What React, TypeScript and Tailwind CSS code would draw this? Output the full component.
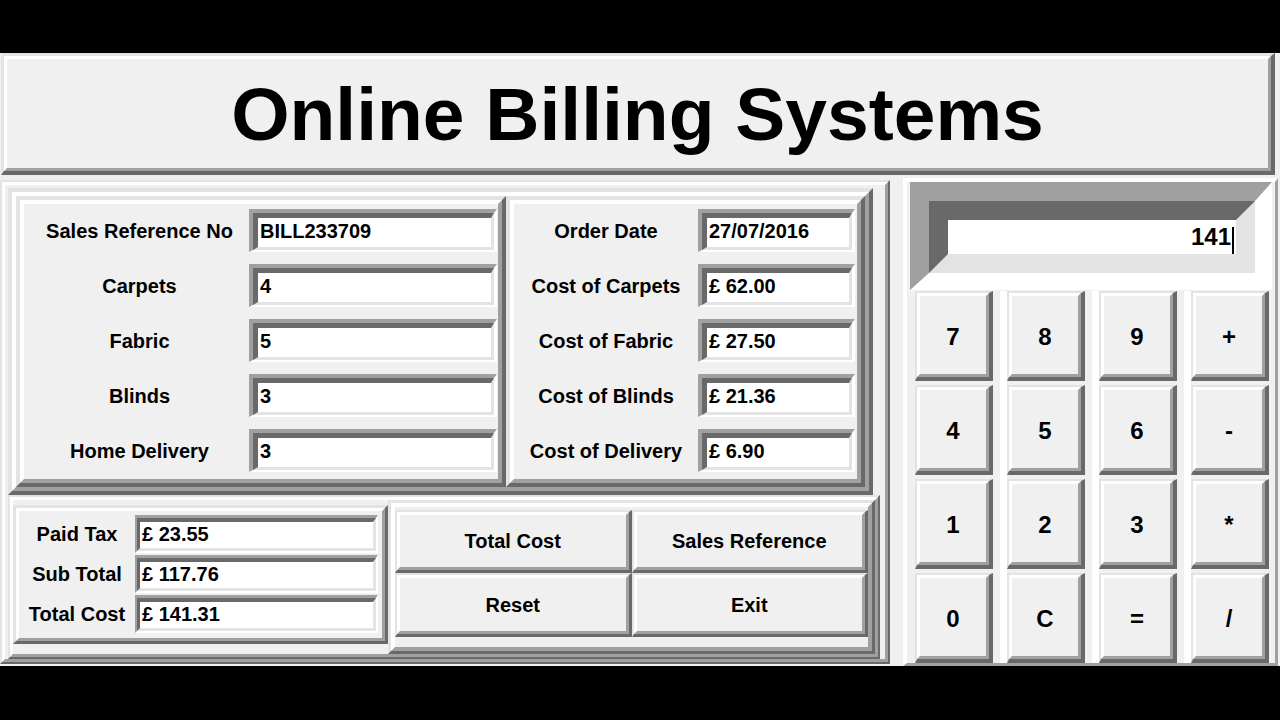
import React from "react";

const RO = "border-t-[#e3e3e3] border-l-[#e3e3e3] border-r-[#696969] border-b-[#696969]";
const RI = "border-t-white border-l-white border-r-[#a0a0a0] border-b-[#a0a0a0]";
const SO = "border-t-[#a0a0a0] border-l-[#a0a0a0] border-r-white border-b-white";
const SI = "border-t-[#696969] border-l-[#696969] border-r-[#e3e3e3] border-b-[#e3e3e3]";

type BoxProps = {
  ow: string;
  iw: string;
  className?: string;
  innerClassName?: string;
  children?: React.ReactNode;
};

function Raised({ ow, iw, className = "", innerClassName = "", children }: BoxProps) {
  return (
    <div className={`${ow} ${RO} ${className}`}>
      <div className={`${iw} ${RI} w-full h-full ${innerClassName}`}>{children}</div>
    </div>
  );
}

function Sunken({ ow, iw, className = "", innerClassName = "", children }: BoxProps) {
  return (
    <div className={`${ow} ${SO} ${className}`}>
      <div className={`${iw} ${SI} w-full h-full bg-white ${innerClassName}`}>{children}</div>
    </div>
  );
}

function Entry({ value, w }: { value: string; w: string }) {
  return (
    <Sunken
      ow="border-t-[4px] border-l-[4px] border-r-[3px] border-b-[2px]"
      iw="border-t-[5px] border-l-[5px] border-r-[3px] border-b-[3px]"
      className={`${w} h-[43px] shrink-0`}
      innerClassName="flex items-center pl-[2px] pb-[3px] text-[20px] font-bold leading-none"
    >
      {value}
    </Sunken>
  );
}

function SmallEntry({ value }: { value: string }) {
  return (
    <Sunken
      ow="border-t-[3px] border-l-[2px] border-r-[2px] border-b-[2px]"
      iw="border-t-[4px] border-l-[3px] border-r-[3px] border-b-[3px]"
      className="w-[243px] h-[38px] shrink-0"
      innerClassName="flex items-center pl-[2px] pb-[2px] text-[20px] font-bold leading-none"
    >
      {value}
    </Sunken>
  );
}

function Row({ label, value, labelW, entryW, labelPad }: { label: string; value: string; labelW: string; entryW: string; labelPad: string }) {
  return (
    <div className="flex items-center h-[43px]">
      <div className={`${labelW} ${labelPad} text-center text-[20px] font-bold leading-none whitespace-nowrap`}>{label}</div>
      <Entry value={value} w={entryW} />
    </div>
  );
}

function ActionButton({ label }: { label: string }) {
  return (
    <Raised
      ow="border-t-[2px] border-l-[2px] border-r-[3px] border-b-[3px]"
      iw="border-[3px]"
      className="w-full h-full"
      innerClassName="flex items-center justify-center bg-[#f0f0f0] text-[20px] font-bold leading-none"
    >
      {label}
    </Raised>
  );
}

function CalcButton({ label }: { label: string }) {
  return (
    <Raised
      ow="border-t-[2px] border-l-[2px] border-r-[4px] border-b-[4px]"
      iw="border-[3px]"
      className="w-[78px] h-[90px]"
      innerClassName="flex items-center justify-center bg-[#f0f0f0] text-[24px] font-bold leading-none"
    >
      <span className="mt-[4px]">{label}</span>
    </Raised>
  );
}

function CalcColumn({ keys, strip }: { keys: string[]; strip: boolean }) {
  return (
    <div className="flex">
      {strip && (
        <>
          <div className="w-[7px]" />
          <div className="w-[7px] bg-white" />
        </>
      )}
      <div className="flex flex-col gap-[4px]">
        {keys.map((k) => (
          <CalcButton key={k} label={k} />
        ))}
      </div>
    </div>
  );
}

export default function App() {
  const left = [
    ["Sales Reference No", "BILL233709"],
    ["Carpets", "4"],
    ["Fabric", "5"],
    ["Blinds", "3"],
    ["Home Delivery", "3"],
  ];
  const right = [
    ["Order Date", "27/07/2016"],
    ["Cost of Carpets", "£ 62.00"],
    ["Cost of Fabric", "£ 27.50"],
    ["Cost of Blinds", "£ 21.36"],
    ["Cost of Delivery", "£ 6.90"],
  ];
  const totals = [
    ["Paid Tax", "£ 23.55"],
    ["Sub Total", "£ 117.76"],
    ["Total Cost", "£ 141.31"],
  ];
  const cols = [
    ["7", "4", "1", "0"],
    ["8", "5", "2", "C"],
    ["9", "6", "3", "="],
    ["+", "-", "*", "/"],
  ];

  return (
    <div
      className="w-[1280px] h-[720px] bg-black overflow-hidden text-black"
      style={{ fontFamily: '"Liberation Sans", Arial, sans-serif' }}
    >
      <div className="mt-[53px] h-[613px] bg-[#f0f0f0] flex flex-col">
        {/* Title */}
        <Raised
          ow="border-t-[3px] border-l-[3px] border-r-[4px] border-b-[4px]"
          iw="border-[3px]"
          className="ml-[1px] w-[1274px] h-[122px] shrink-0"
          innerClassName="flex items-center justify-center bg-[#f0f0f0]"
        >
          <div className="text-[75px] font-bold leading-[86px] whitespace-nowrap">Online Billing Systems</div>
        </Raised>

        <div className="flex items-start mt-[3px]">
          {/* Main left frame */}
          <Raised
            ow="border-[2px]"
            iw="border-[3px]"
            className="mt-[2px] w-[890px] h-[484px] shrink-0"
            innerClassName="flex flex-col pl-[3px] pt-[3px] bg-[#f0f0f0]"
          >
            {/* Top frame */}
            <Raised ow="border-[4px]" iw="border-[4px]" className="w-[865px] h-[307px] shrink-0" innerClassName="flex">
              <Raised ow="border-[4px]" iw="border-[4px]" className="w-[490px] h-[291px]" innerClassName="flex flex-col pt-[5px] gap-[12px]">
                {left.map(([l, v]) => (
                  <Row key={l} label={l} value={v} labelW="w-[225px]" entryW="w-[248px]" labelPad="pl-[6px]" />
                ))}
              </Raised>
              <Raised ow="border-[4px]" iw="border-[4px]" className="w-[359px] h-[291px]" innerClassName="flex flex-col pt-[5px] gap-[12px]">
                {right.map(([l, v]) => (
                  <Row key={l} label={l} value={v} labelW="w-[184px]" entryW="w-[157px]" labelPad="pl-0" />
                ))}
              </Raised>
            </Raised>

            {/* Bottom frame */}
            <Raised ow="border-[2px]" iw="border-[3px]" className="w-[872px] h-[164px] shrink-0" innerClassName="flex items-start">
              <Raised ow="border-[3px]" iw="border-[3px]" className="mt-[5px] w-[375px] h-[139px] shrink-0" innerClassName="flex flex-col pt-[4px] gap-[2px]">
                {totals.map(([l, v]) => (
                  <div key={l} className="flex items-center h-[38px]">
                    <div className="w-[116px] text-center text-[20px] font-bold leading-none whitespace-nowrap">{l}</div>
                    <SmallEntry value={v} />
                  </div>
                ))}
              </Raised>
              <Raised ow="border-[3px]" iw="border-[4px]" className="w-[487px] h-[154px] shrink-0" innerClassName="pt-[3px]">
                <div className="grid grid-cols-2 grid-rows-[63px_64px]">
                  <ActionButton label="Total Cost" />
                  <ActionButton label="Sales Reference" />
                  <ActionButton label="Reset" />
                  <ActionButton label="Exit" />
                </div>
              </Raised>
            </Raised>
          </Raised>

          {/* Calculator */}
          <div className="ml-[13px] w-[375px] h-[488px] shrink-0 border-t-[4px] border-l-[4px] border-r-[3px] border-b-[3px] border-t-white border-l-white border-r-[#a0a0a0] border-b-[#a0a0a0] flex flex-col">
            <Sunken
              ow="border-t-[19px] border-l-[19px] border-r-[17px] border-b-[17px]"
              iw="border-[19px]"
              className="ml-[3px] w-[362px] h-[108px] shrink-0"
              innerClassName="flex items-center justify-end pr-[2px]"
            >
              <span className="text-[24px] font-bold leading-none">141</span>
              <span className="ml-[1px] w-[2px] h-[27px] bg-black self-end" />
            </Sunken>
            <div className="flex ml-[8px] mt-[1px]">
              {cols.map((c, i) => (
                <CalcColumn key={i} keys={c} strip={i > 0} />
              ))}
            </div>
          </div>
        </div>
      </div>
    </div>
  );
}
